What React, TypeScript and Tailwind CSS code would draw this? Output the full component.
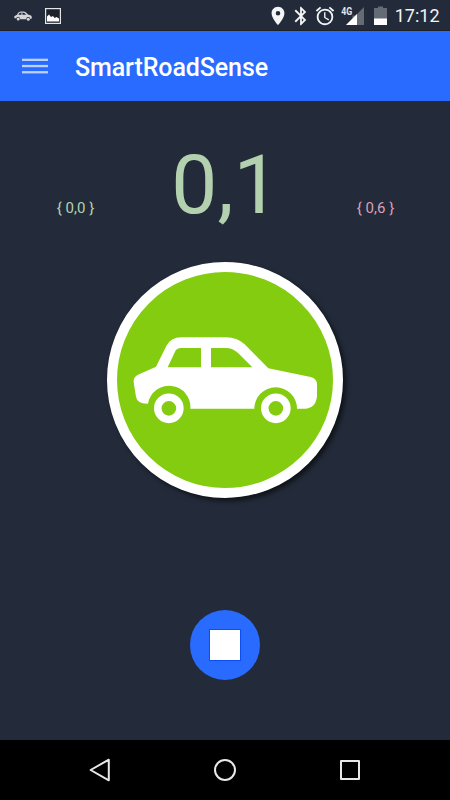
import React from 'react';
import { MdAlarm, MdBluetooth, MdLocationOn } from 'react-icons/md';

const CarShape: React.FC<{ className?: string }> = ({ className }) => (
  <svg viewBox="99 246 555 261" className={className} fill="currentColor">
    <path
      fillRule="evenodd"
      d="M101 382Q100 365 114 359L168 335L199 273Q212 247 244 247H378Q411 247 434 268L505 340L632 366Q651 371 651 388V424Q647 461 614 461H591A64 64 0 0 0 463 461H271A64 64 0 0 0 144 446Q112 447 108 425ZM203 337H303V279H243Q230 279 225 290ZM333 279V337H457L415 295Q398 279 378 279Z"
    />
    <path
      fillRule="evenodd"
      d="M162 460a44.500 44.500 0 1 0 89 0a44.500 44.500 0 1 0 -89 0ZM184.500 460a22 22 0 1 0 44 0a22 22 0 1 0 -44 0ZM483 460a44.500 44.500 0 1 0 89 0a44.500 44.500 0 1 0 -89 0ZM505.500 460a22 22 0 1 0 44 0a22 22 0 1 0 -44 0Z"
    />
  </svg>
);

const SmallCar = () => (
  <svg viewBox="0 0 18 10" className="w-[18px] h-[10px] text-[#d3d5d8]" fill="currentColor">
    <path
      fillRule="evenodd"
      d="M0.300 5.200L3 3.800Q4.500 0.500 7 0.500H10Q11.500 0.500 14 3.600L17 4.600Q18 5 17.800 7.600L16.300 7.900A2 2 0 0 0 12.300 8.200H6.200A2 2 0 0 0 2.200 7.600L0.300 7ZM4.300 3.800H7.400V1.500Q5.200 1.400 4.300 3.800ZM8.400 1.500V3.800H12.200Q10.600 1.500 8.400 1.500Z"
    />
    <circle cx="4.200" cy="8" r="1.500" />
    <circle cx="14.300" cy="8.200" r="1.500" />
  </svg>
);

const PictureIcon = () => (
  <svg viewBox="0 0 16 16" className="w-4 h-4">
    <rect x="0.600" y="0.600" width="14.800" height="14.800" fill="#20222b" stroke="#e4e5e8" strokeWidth="1.200" />
    <path d="M2 13.500V8.500L4 6.500L6 9L8 8L9.500 10L11.500 9L14 10.500V13.500Z" fill="#fff" />
  </svg>
);

const StatusBar = () => (
  <div className="flex h-[31px] items-center border-b border-[#1d2024] bg-[#232b3a] text-[#f4f5f6]">
    <div className="ml-[14px] mt-[2px] flex items-center gap-[13px]">
      <SmallCar />
      <PictureIcon />
    </div>
    <div className="ml-auto flex h-full items-center pt-px">
      <MdLocationOn className="size-[22px]" />
      <MdBluetooth className="ml-[1px] size-[22px]" />
      <MdAlarm className="ml-[2px] size-[22px]" />
      <svg viewBox="0 0 24 20" className="ml-[5px] h-5 w-6">
        <path d="M23 1V19H5L11.500 12.500V9.500H14.500Z" fill="#656b75" />
        <path d="M5 19L16 8V19Z" fill="#fff" />
        <text x="0.300" y="9.300" fontSize="10.500" fontFamily="Roboto" fontWeight="700" textLength="11" lengthAdjust="spacingAndGlyphs" fill="#e4e5e7">
          4G
        </text>
      </svg>
      <svg viewBox="0 0 13 20" className="ml-[9px] h-5 w-[13px]">
        <path d="M4 0.500H9V2H13V13H0V2H4Z" fill="#656b75" />
        <path d="M0 12.500H13V19H0Z" fill="#fff" />
      </svg>
      <span className="ml-[8px] mr-[10.500px] text-[18px] leading-5">17:12</span>
    </div>
  </div>
);

const AppHeader = () => (
  <header className="flex h-[70px] items-center bg-[#2a6bff] pl-[22px]">
    <svg viewBox="0 0 26 16" className="h-4 w-[26px]" fill="#bdd1ff" aria-label="Menu">
      <rect y="0.700" width="26" height="2.300" />
      <rect y="6.900" width="26" height="2.300" />
      <rect y="13.100" width="26" height="2.300" />
    </svg>
    <h1 className="ml-[27px] mt-[4px] text-[25px] font-medium leading-8 tracking-[-0.100px] text-white">SmartRoadSense</h1>
  </header>
);

const NavBar = () => (
  <nav className="flex h-[60px] items-center justify-between bg-black px-[88px]">
    <svg viewBox="0 0 24 26" className="h-[26px] w-6" fill="none" stroke="#e8e8e8" strokeWidth="2" strokeLinejoin="round">
      <path d="M2.600 13L20.800 2.700V23.300Z" />
    </svg>
    <svg viewBox="0 0 24 24" className="size-6" fill="none" stroke="#e8e8e8" strokeWidth="2">
      <circle cx="12" cy="12" r="10" />
    </svg>
    <svg viewBox="0 0 24 24" className="size-6" fill="none" stroke="#e8e8e8" strokeWidth="2" strokeLinejoin="round">
      <rect x="3" y="3" width="18" height="18" />
    </svg>
  </nav>
);

const App: React.FC = () => {
  return (
    <div className="flex h-[800px] w-[450px] flex-col overflow-hidden bg-[#232b3a] font-['Roboto',sans-serif]">
      <StatusBar />
      <AppHeader />

      <main className="flex flex-1 flex-col items-center">
        {/* Readings */}
        <div className="grid h-[161px] w-full grid-cols-3 text-center">
          <span className="mt-[98px] pl-px text-[15px] leading-[18px] text-[#b3d3af]">{'{ 0,0 }'}</span>
          <span className="mt-[36px] pl-px text-[82px] leading-[96px] text-[#b3d1ae]">0,1</span>
          <span className="mt-[98px] pl-px text-[15px] leading-[18px] text-[#dc9fb6]">{'{ 0,6 }'}</span>
        </div>

        {/* Road quality badge */}
        <div className="flex size-[236px] shrink-0 items-center justify-center rounded-full border-[10px] border-white bg-[#84cc0f] shadow-[3px_3px_5px_rgba(0,0,0,0.6)]">
          <CarShape className="ml-px mt-px h-[87px] w-[185px] shrink-0 text-white" />
        </div>

        <button className="mt-[112px] flex size-[70px] items-center justify-center rounded-full bg-[#2a6bff]" aria-label="Stop">
          <span className="size-[32px] border border-[#0b4dfb] bg-white"></span>
        </button>
      </main>

      <NavBar />
    </div>
  );
};

export default App;
